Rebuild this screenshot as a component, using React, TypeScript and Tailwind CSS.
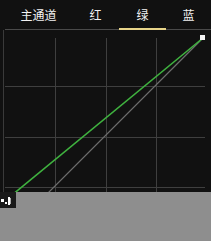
import React from "react";

const tabs = [
  { label: "主通道", w: "w-[67px]", active: false },
  { label: "红", w: "w-[47px]", active: false },
  { label: "绿", w: "w-[47px]", active: true },
  { label: "蓝", w: "w-[45px]", active: false },
];

// curve grid, drawn in chart coords (origin = top of chart area)
function CurveChart() {
  const xs = [55, 106, 156];
  const ys = [56, 107, 157];
  return (
    <svg width="211" height="211" viewBox="0 0 211 211" className="block shrink-0">
      <line x1="3.5" y1="0" x2="3.5" y2="211" stroke="#3a3a3a" strokeWidth="1" />
      {xs.map((x) => (
        <line key={"v" + x} x1={x + 0.5} y1="8" x2={x + 0.5} y2="208" stroke="#3f3f3f" strokeWidth="1" />
      ))}
      {ys.map((y) => (
        <line key={"h" + y} x1="5" y1={y + 0.5} x2="205" y2={y + 0.5} stroke="#3f3f3f" strokeWidth="1" />
      ))}
      <line x1="3" y1="208" x2="203" y2="8" stroke="#6e6e6e" strokeWidth="1.2" />
      <line x1="6" y1="170" x2="203" y2="8" stroke="#3fb23f" strokeWidth="1.6" />
      <rect x="200" y="5" width="5" height="5" fill="#f2f2f2" />
    </svg>
  );
}

function HandleIcon() {
  return (
    <svg width="16" height="16" viewBox="0 0 16 16" className="block">
      <rect width="16" height="16" fill="#1a1a1a" />
      <rect x="1" y="7" width="3" height="3" fill="#ffffff" />
      <rect x="5" y="10" width="2" height="2" fill="#ffffff" />
      <rect x="8" y="5" width="2" height="8" fill="#ffffff" />
      <rect x="10" y="6" width="1" height="6" fill="#aaaaaa" />
    </svg>
  );
}

export default function App() {
  return (
    <div className="flex flex-col w-[211px] h-[241px] overflow-hidden bg-[#111111] font-['Noto_Sans_CJK_SC',sans-serif] text-[#f2f2f2]">
      <div className="flex h-[30px] shrink-0 border-b border-[#4a4a4a] ml-[5px]">
        {tabs.map((t) => (
          <div
            key={t.label}
            className={`${t.w} flex items-center justify-center text-[12px] leading-none ${
              t.active ? "border-b-2 border-[#e8d58a] -mb-px pt-[2px]" : ""
            }`}
          >
            {t.label}
          </div>
        ))}
      </div>
      <div className="h-[162px] shrink-0 overflow-hidden">
        <CurveChart />
      </div>
      <div className="flex h-[16px] shrink-0">
        <HandleIcon />
        <div className="flex-1 bg-[#8e8e8e]" />
      </div>
      <div className="flex-1 bg-[#8e8e8e]" />
    </div>
  );
}
